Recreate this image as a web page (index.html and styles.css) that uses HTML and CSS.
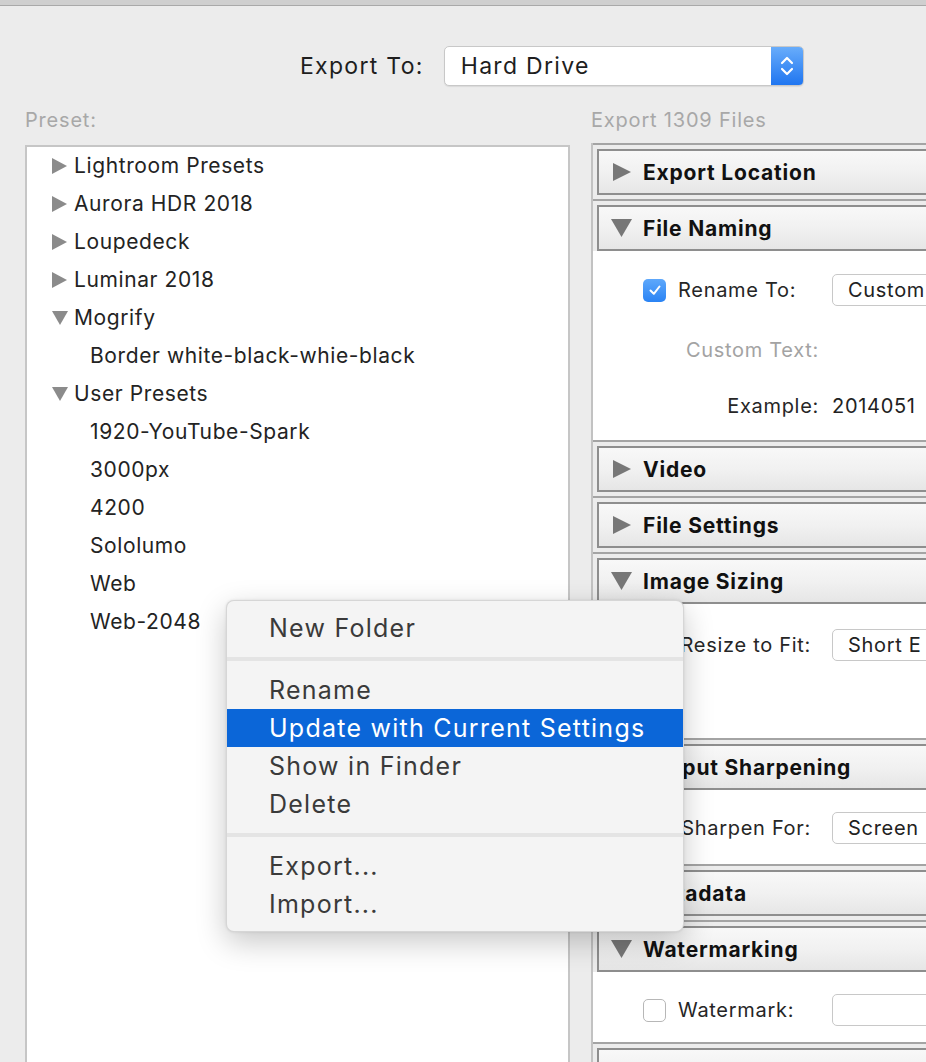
FILE: index.html
```
<!DOCTYPE html>
<html>
<head>
<meta charset="utf-8">
<link rel="stylesheet" href="styles.css">
</head>
<body>
<div class="topbar"></div>
<div class="export-row">
  <span class="export-label">Export To:</span>
  <div class="select big">
    <span class="select-text">Hard Drive</span>
    <span class="stepper">
      <svg width="18" height="28" viewBox="0 0 18 28"><path d="M4 11 L9 6 L14 11" fill="none" stroke="#fff" stroke-width="2.2" stroke-linecap="round" stroke-linejoin="round"/><path d="M4 17 L9 22 L14 17" fill="none" stroke="#fff" stroke-width="2.2" stroke-linecap="round" stroke-linejoin="round"/></svg>
    </span>
  </div>
</div>
<div class="main">
  <div class="col-left">
    <div class="col-label">Preset:</div>
    <div class="tree">
      <div class="tree-row"><span class="tw"><svg width="15" height="16" viewBox="0 0 15 16"><path d="M0 0 L15 8 L0 16Z" fill="#8b8b8b"/></svg></span>Lightroom Presets</div>
      <div class="tree-row"><span class="tw"><svg width="15" height="16" viewBox="0 0 15 16"><path d="M0 0 L15 8 L0 16Z" fill="#8b8b8b"/></svg></span>Aurora HDR 2018</div>
      <div class="tree-row"><span class="tw"><svg width="15" height="16" viewBox="0 0 15 16"><path d="M0 0 L15 8 L0 16Z" fill="#8b8b8b"/></svg></span>Loupedeck</div>
      <div class="tree-row"><span class="tw"><svg width="15" height="16" viewBox="0 0 15 16"><path d="M0 0 L15 8 L0 16Z" fill="#8b8b8b"/></svg></span>Luminar 2018</div>
      <div class="tree-row"><span class="tw"><svg width="16" height="14" viewBox="0 0 16 14"><path d="M0 0 L16 0 L8 14Z" fill="#8b8b8b"/></svg></span>Mogrify</div>
      <div class="tree-row child">Border white-black-whie-black</div>
      <div class="tree-row"><span class="tw"><svg width="16" height="14" viewBox="0 0 16 14"><path d="M0 0 L16 0 L8 14Z" fill="#8b8b8b"/></svg></span>User Presets</div>
      <div class="tree-row child">1920-YouTube-Spark</div>
      <div class="tree-row child">3000px</div>
      <div class="tree-row child">4200</div>
      <div class="tree-row child">Sololumo</div>
      <div class="tree-row child">Web</div>
      <div class="tree-row child">Web-2048</div>
    </div>
  </div>
  <div class="col-right">
    <div class="col-label right-label">Export 1309 Files</div>
    <div class="panel">
      <div class="sec">
        <div class="sec-head"><span class="hi"><svg width="18" height="18" viewBox="0 0 18 18"><path d="M0 0 L18 9 L0 18Z" fill="#777"/></svg></span>Export Location</div>
      </div>
      <div class="sec open">
        <div class="sec-head"><span class="hi"><svg width="21" height="18" viewBox="0 0 21 18"><path d="M0 0 L21 0 L10.5 18Z" fill="#777"/></svg></span>File Naming</div>
        <div class="sec-body naming">
          <div class="frow">
            <div class="flabel check-label"><span class="cb on"><svg width="16" height="16" viewBox="0 0 16 16"><path d="M3.5 8.5 L6.8 11.8 L12.5 4.5" fill="none" stroke="#fff" stroke-width="2" stroke-linecap="round" stroke-linejoin="round"/></svg></span>Rename To:</div>
            <div class="select small">Custom</div>
          </div>
          <div class="frow r-custom">
            <div class="flabel muted">Custom Text:</div>
          </div>
          <div class="frow r-example">
            <div class="flabel">Example:</div>
            <div class="fvalue">2014051</div>
          </div>
        </div>
      </div>
      <div class="sec">
        <div class="sec-head"><span class="hi"><svg width="18" height="18" viewBox="0 0 18 18"><path d="M0 0 L18 9 L0 18Z" fill="#777"/></svg></span>Video</div>
      </div>
      <div class="sec">
        <div class="sec-head"><span class="hi"><svg width="18" height="18" viewBox="0 0 18 18"><path d="M0 0 L18 9 L0 18Z" fill="#777"/></svg></span>File Settings</div>
      </div>
      <div class="sec open">
        <div class="sec-head"><span class="hi"><svg width="21" height="18" viewBox="0 0 21 18"><path d="M0 0 L21 0 L10.5 18Z" fill="#777"/></svg></span>Image Sizing</div>
        <div class="sec-body sizing">
          <div class="frow">
            <div class="flabel narrow">Resize to Fit:</div>
            <div class="select small">Short E</div>
          </div>
        </div>
      </div>
      <div class="sec open">
        <div class="sec-head"><span class="hi"><svg width="21" height="18" viewBox="0 0 21 18"><path d="M0 0 L21 0 L10.5 18Z" fill="#777"/></svg></span>Output Sharpening</div>
        <div class="sec-body sharpen">
          <div class="frow">
            <div class="flabel narrow">Sharpen For:</div>
            <div class="select small">Screen</div>
          </div>
        </div>
      </div>
      <div class="sec">
        <div class="sec-head"><span class="hi"><svg width="18" height="18" viewBox="0 0 18 18"><path d="M0 0 L18 9 L0 18Z" fill="#777"/></svg></span>Metadata</div>
      </div>
      <div class="sec open">
        <div class="sec-head"><span class="hi"><svg width="21" height="18" viewBox="0 0 21 18"><path d="M0 0 L21 0 L10.5 18Z" fill="#777"/></svg></span>Watermarking</div>
        <div class="sec-body water">
          <div class="frow">
            <div class="flabel check-label"><span class="cb"></span>Watermark:</div>
            <div class="select small"></div>
          </div>
        </div>
      </div>
      <div class="sec">
        <div class="sec-head"></div>
      </div>
    </div>
  </div>
</div>
<div class="menu">
  <div class="mi">New Folder</div>
  <div class="msep"></div>
  <div class="mi">Rename</div>
  <div class="mi active">Update with Current Settings</div>
  <div class="mi">Show in Finder</div>
  <div class="mi">Delete</div>
  <div class="msep"></div>
  <div class="mi">Export...</div>
  <div class="mi">Import...</div>
</div>
</body>
</html>
```

FILE: styles.css
```
html, body {
  margin: 0;
  padding: 0;
}
body {
  width: 926px;
  height: 1062px;
  overflow: hidden;
  position: relative;
  background: #ececec;
  font-family: "Inter", "Open Sans", "Liberation Sans", sans-serif;
  color: #222;
}
.topbar {
  height: 5px;
  background: #cfcfcf;
  border-bottom: 1px solid #a9a9a9;
}
.export-row {
  display: flex;
  align-items: center;
  gap: 20px;
  padding-left: 300px;
  margin-top: 40px;
  height: 40px;
}
.export-label {
  font-size: 23px;
  letter-spacing: 1.3px;
  color: #1e1e1e;
}
.select {
  background: #fff;
  border: 1px solid #c8c8c8;
  border-radius: 5px;
  box-sizing: border-box;
  display: flex;
  align-items: center;
  white-space: nowrap;
  overflow: hidden;
}
.select.big {
  width: 360px;
  height: 40px;
  font-size: 23px;
  letter-spacing: 1.3px;
  color: #1e1e1e;
  box-shadow: 0 1px 1px rgba(0,0,0,0.08);
}
.select-text {
  flex: 1;
  padding-left: 16px;
}
.stepper {
  width: 33px;
  height: 40px;
  margin: -1px -1px -1px 0;
  background: linear-gradient(#6aaefb, #1d74f0);
  border-radius: 0 5px 5px 0;
  display: flex;
  align-items: center;
  justify-content: center;
}
.main {
  display: flex;
  gap: 21px;
  padding-left: 25px;
}
.col-left {
  width: 545px;
  flex: none;
}
.col-right {
  width: 620px;
  flex: none;
}
.col-label {
  height: 59px;
  box-sizing: border-box;
  padding-top: 22px;
  line-height: 24px;
  font-size: 20px;
  letter-spacing: 0.8px;
  color: #a8a8a8;
}
.col-label.right-label {
  height: 57px;
}
.tree {
  background: #fff;
  border: 2px solid #c6c6c6;
  height: 1000px;
  box-sizing: border-box;
  padding-left: 25px;
}
.tree-row {
  height: 38px;
  line-height: 38px;
  font-size: 21px;
  letter-spacing: 0.6px;
  display: flex;
  align-items: center;
  color: #232323;
}
.tw {
  width: 16px;
  margin-right: 6px;
  display: flex;
  align-items: center;
}
.tree-row.child {
  padding-left: 38px;
}
.panel {
  border-left: 2px solid #c2c2c2;
  height: 1000px;
}
.sec {
  border-top: 2px solid #a4a4a4;
  padding: 4px 0 4px 4px;
}
.sec.open {
  padding-bottom: 0;
}
.sec-head {
  height: 42px;
  border: 2px solid #8e8e8e;
  border-right: none;
  background: linear-gradient(#f8f8f8, #f1f1f1 50%, #e6e6e6);
  display: flex;
  align-items: center;
  font-size: 21px;
  letter-spacing: 0.8px;
  font-weight: 700;
  color: #111;
}
.hi {
  width: 21px;
  margin-left: 12px;
  margin-right: 11px;
  display: flex;
  align-items: center;
  justify-content: center;
}
.sec-body {
  background: #fff;
  margin-left: -4px;
  box-sizing: border-box;
}
.naming { height: 189px; padding-top: 23px; }
.sizing { height: 134px; padding-top: 25px; }
.sharpen { height: 74px; padding-top: 22px; }
.water { height: 70px; padding-top: 22px; }
.frow {
  display: flex;
  align-items: center;
  height: 32px;
  font-size: 20px;
  letter-spacing: 0.7px;
  white-space: nowrap;
}
.r-custom { margin-top: 28px; }
.r-example { margin-top: 24px; }
.flabel {
  width: 226px;
  flex: none;
  text-align: right;
  color: #262626;
  display: flex;
  justify-content: flex-end;
  align-items: center;
}
.flabel.narrow {
  width: 218px;
  margin-right: 8px;
}
.flabel.muted {
  color: #a3a3a3;
}
.check-label {
  justify-content: flex-start;
  padding-left: 50px;
  box-sizing: border-box;
}
.cb {
  width: 23px;
  height: 23px;
  box-sizing: border-box;
  border-radius: 5px;
  border: 1px solid #b7b7b7;
  background: #fff;
  margin-right: 12px;
  display: flex;
  align-items: center;
  justify-content: center;
}
.cb.on {
  border: none;
  background: linear-gradient(#5ea8fb, #2a83f4);
}
.select.small {
  margin-left: 13px;
  width: 300px;
  height: 32px;
  padding-left: 15px;
  color: #222;
}
.fvalue {
  margin-left: 13px;
  color: #222;
}
.menu {
  position: absolute;
  left: 226px;
  top: 600px;
  width: 458px;
  padding: 8px 0;
  background: #f4f4f4;
  border-radius: 8px;
  border: 1px solid rgba(0,0,0,0.12);
  box-sizing: border-box;
  box-shadow: 0 10px 30px rgba(0,0,0,0.22), 0 0 3px rgba(0,0,0,0.1);
}
.mi {
  height: 38px;
  line-height: 38px;
  padding-left: 42px;
  font-size: 25px;
  letter-spacing: 1.25px;
  color: #3a3a3a;
}
.mi.active {
  background: #0b66d8;
  color: #fff;
}
.msep {
  height: 4px;
  margin: 10px 0;
  background: #e4e4e4;
}
```
